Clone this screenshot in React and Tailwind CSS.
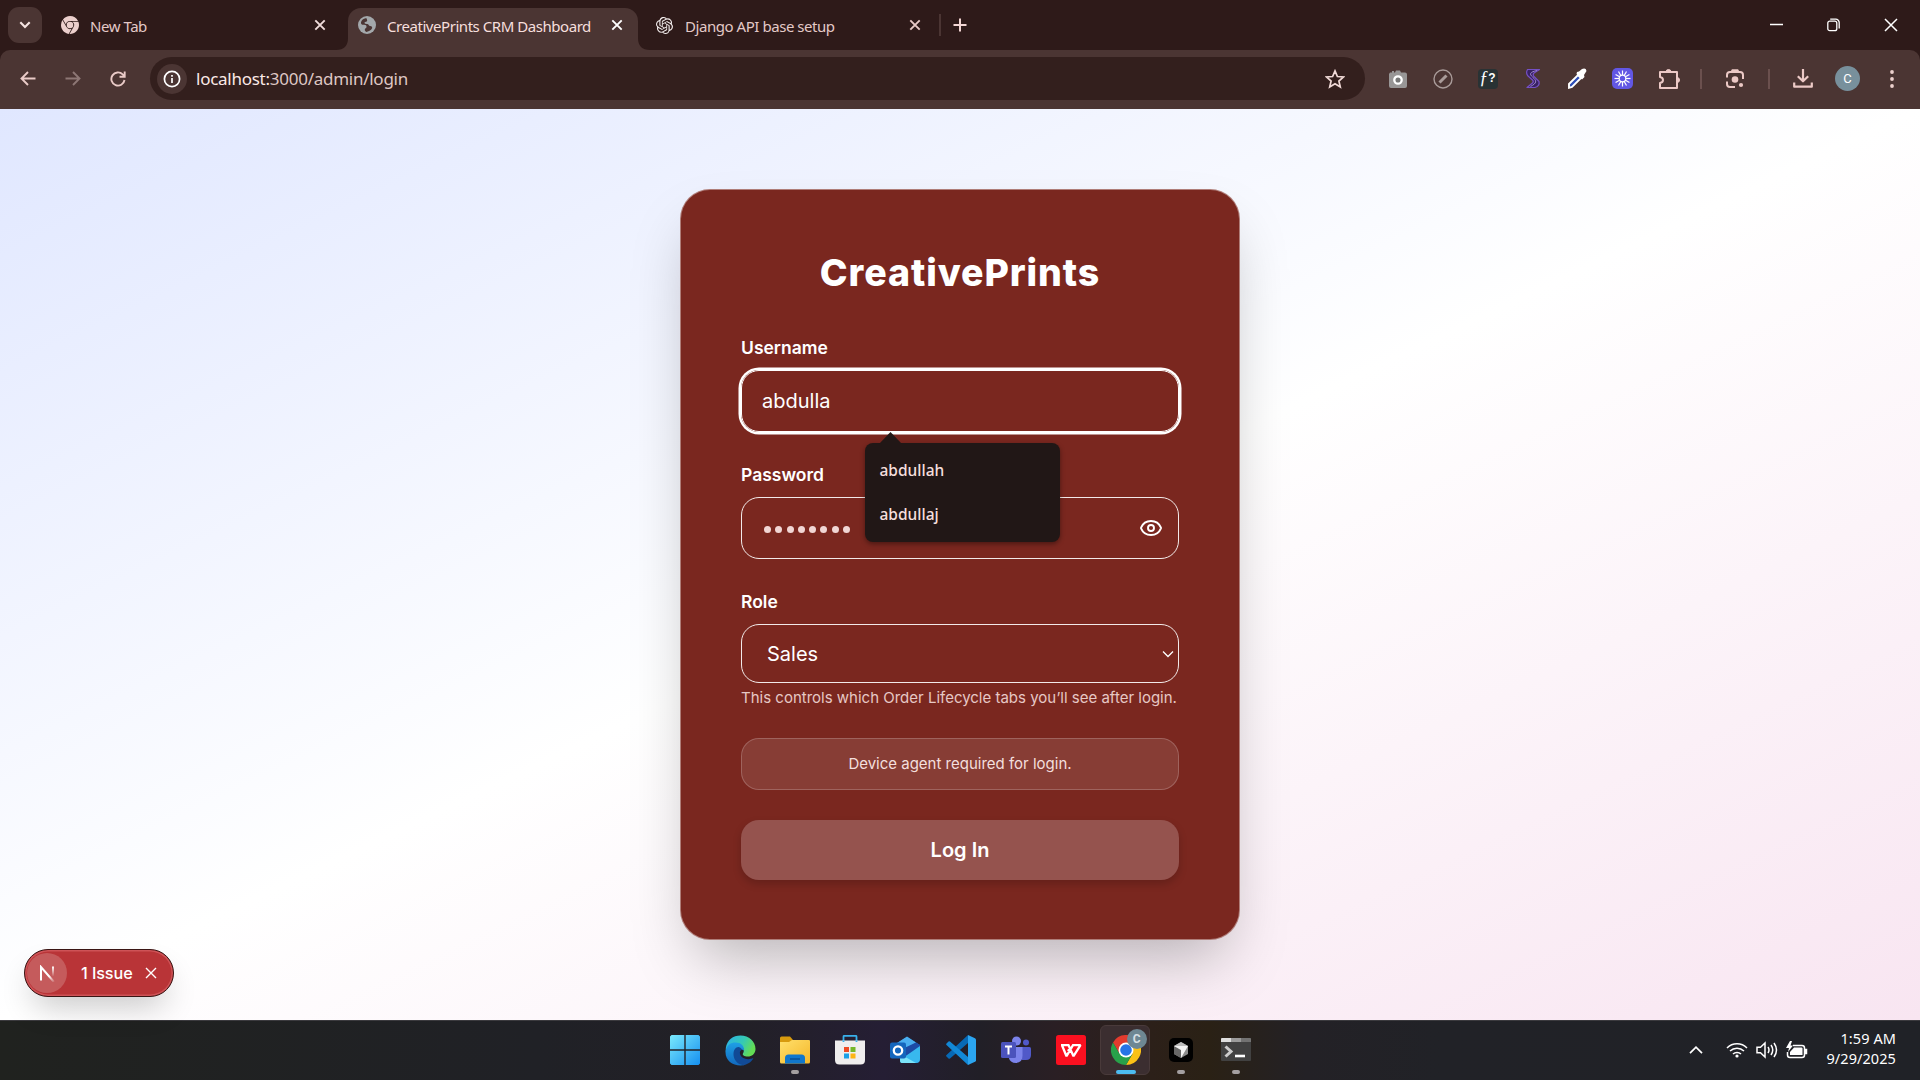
import React from "react";
import { SiGooglechrome, SiOpenai } from "react-icons/si";
import { Eye } from "lucide-react";

const UI = "font-['Noto_Sans','Open_Sans',sans-serif]";

function CloseIcon({ color = "#f0dcdb" }) {
  return (
    <svg width="12" height="12" viewBox="0 0 12 12" stroke={color} strokeWidth="1.9" fill="none">
      <path d="M1.3 1.3l9.4 9.4M10.7 1.3L1.3 10.7" />
    </svg>
  );
}

function TabStrip() {
  return (
    <div className="relative flex h-[50px] bg-[#2e1a19] text-[15px] tracking-[-0.45px] text-[#e3c9c7]">
      <div className="ml-2 mt-[7px] flex h-[36px] w-[34px] items-center justify-center rounded-[11px] bg-[#4b3533]">
        <svg width="12" height="8" viewBox="0 0 12 8" fill="none" stroke="#f6e4e2" strokeWidth="2.1"><path d="M1.3 1.3L6 6l4.700-4.700" /></svg>
      </div>
      <div className="mt-[7px] flex h-9 w-[306px] items-center pl-[19px]">
        <SiGooglechrome size={18} color="#eccfcc" />
        <span className="ml-[11px] w-[224px] pt-[2px]">New Tab</span>
        <CloseIcon />
      </div>
      <div className="relative mt-2 flex h-[42px] w-[290px] items-center rounded-t-[13px] bg-[#4b3533] pb-[8px] pl-[10px] text-[#f6dfdd]">
        <svg className="absolute -left-3 bottom-0" width="12" height="12"><path d="M12 0v12H0Q12 12 12 0Z" fill="#4b3533" /></svg>
        <svg className="absolute -right-3 bottom-0" width="12" height="12"><path d="M0 0v12h12Q0 12 0 0Z" fill="#4b3533" /></svg>
        <svg width="18" height="18" viewBox="0 0 18 18">
          <circle cx="9" cy="9" r="9" fill="#a3a8ab" />
          <path d="M7.500 2.200C5.500 2.600 3.500 4 3 6.200 2.700 8.200 4 8.800 6 8.700c2 0 2.600.8 2.500 2.200 0 1.200-1.600 1.200-1.700 2.700-.1 1 .4 1.800 1.300 2.300 2.300-.1 4.900-1.500 6-3.600.4-1.300-.3-2.300-1.900-2.400-1.500-.1-1.500-1.900-3-2-1.500 0-2.600.1-2.700-1.100 0-1 1.300-.8 2.200-1.200.9-.5.3-2-.2-3.300Z" fill="#4b3533" />
        </svg>
        <span className="ml-[11px] w-[224px] whitespace-nowrap pt-[2px]">CreativePrints CRM Dashboard</span>
        <CloseIcon color="#fff" />
      </div>
      <div className="mt-[7px] flex h-9 w-[303px] items-center border-r-2 border-[#4b3533] pl-[18px] [border-image:linear-gradient(transparent_22%,#4b3533_22%,#4b3533_78%,transparent_78%)_1]">
        <SiOpenai size={17} color="#f4eeee" />
        <span className="ml-[12px] w-[224px] pt-[2px]">Django API base setup</span>
        <CloseIcon color="#e8c9c6" />
      </div>
      <svg className="ml-[12px] mt-[18px]" width="14" height="14" stroke="#f3d6d4" strokeWidth="2"><path d="M7 .5v13M.5 7h13" /></svg>
      <div className="ml-auto flex h-[50px] items-center pr-[22px]">
        <svg width="13" height="14" stroke="#fff" strokeWidth="1.500"><path d="M0 6.500h13" /></svg>
        <svg className="ml-[44px]" width="13" height="14" fill="none" stroke="#fff" strokeWidth="1.300"><rect x=".8" y="3.200" width="9" height="9.500" rx="2" /><path d="M3.200 1.200h5.600a3.400 3.400 0 0 1 3.400 3.400v5.800" /></svg>
        <svg className="ml-[44px]" width="14" height="14" stroke="#fff" strokeWidth="1.500"><path d="M1 1l12 12M13 1L1 13" /></svg>
      </div>
    </div>
  );
}

function ToolSlot({ w = "w-[45px]", children }) {
  return <div className={`flex h-full shrink-0 items-center justify-center ${w}`}>{children}</div>;
}

function Toolbar() {
  const pink = "#eacbc8";
  return (
    <div className="bg-[#2e1a19]">
      <div className="flex h-[59px] items-center rounded-t-[10px] bg-[#4b3533] pb-[2px] pl-[5px]">
        <ToolSlot><svg width="16" height="15" fill="none" stroke={pink} strokeWidth="1.900"><path d="M15.500 7.500H1.500M8 1L1.500 7.500 8 14" /></svg></ToolSlot>
        <ToolSlot><svg width="16" height="15" fill="none" stroke="#8d7775" strokeWidth="1.900"><path d="M.5 7.500h14M8 1l6.500 6.500L8 14" /></svg></ToolSlot>
        <ToolSlot><svg width="16" height="16" fill="none" stroke={pink} strokeWidth="1.900"><path d="M14.500 9A6.600 6.600 0 1 1 12.700 3.400l1.800 1.900M14.700.5v5.200H9.500" /></svg></ToolSlot>
        <div className="ml-[10px] flex h-[43px] w-[1215px] shrink-0 items-center rounded-full bg-[#331f1d] pl-[7px] pr-[20px]">
          <div className="flex h-[30px] w-[30px] items-center justify-center rounded-full bg-[#4b3533]">
            <svg width="18" height="18" fill="none" stroke="#fff" strokeWidth="1.700"><circle cx="9" cy="9" r="7.600" /><path d="M9 8v5M9 5v1.700" /></svg>
          </div>
          <span className="ml-[9px] text-[17px] tracking-[-0.26px] text-[#dfc7c4]"><span className="text-[#fbe9e7]">localhost:</span>3000/admin/login</span>
          <svg className="ml-auto" width="20" height="20" viewBox="0 0 20 20" fill="none" stroke="#f0d9d6" strokeWidth="1.700"><path d="M10 1.900l2.400 5.600 6.100.5-4.600 4 1.400 6L10 14.800 4.700 18l1.400-6-4.600-4 6.100-.5Z" /></svg>
        </div>
        <div className="ml-[10px] flex h-full shrink-0 items-center">
          <ToolSlot>
            <svg width="20" height="20"><path d="M2 3.500h2v-1.500h2v1.500h1l1-2h4l1 2h4a2 2 0 0 1 2 2V17a2 2 0 0 1-2 2H3a2 2 0 0 1-2-2V5Z" fill="#989696" /><circle cx="10" cy="11" r="3.700" fill="#777" stroke="#fff" strokeWidth="2.300" /></svg>
          </ToolSlot>
          <ToolSlot><svg width="20" height="20" fill="none" stroke="#a99b99"><circle cx="10" cy="10" r="9" strokeWidth="1.400" /><path d="M6.500 13.500L13.500 6.500" strokeWidth="3" /></svg></ToolSlot>
          <ToolSlot><div className="flex h-5 w-5 items-center justify-center rounded-[4px] bg-[#293234] pb-[2px] font-['Liberation_Serif',serif] text-[18px] italic leading-none text-white">ƒ<span className="font-['Liberation_Sans',sans-serif] text-[12px] font-bold not-italic">?</span></div></ToolSlot>
          <ToolSlot><svg width="18" height="21" fill="none"><path d="M15.500 1.500H3.500Q1.500 5 4 8l4.500 4q1.500 1.500 0 3L3 19.500h8q5-1.500 4-6L9.500 8q-1-1.500.5-3Z" fill="#382263" stroke="#7550c5" strokeWidth="1.200" strokeLinejoin="round" /><path d="M13 2.500C6 4 5 6 8.500 9c4.500 4 4.500 6-2 9.500" stroke="#a78fd8" strokeWidth=".9" /></svg></ToolSlot>
          <ToolSlot><svg width="21" height="21" viewBox="0 0 21 21"><path d="M2 16l9-9 3 3-9 9-3 .8Z" fill="#2c4db7" stroke="#fff" strokeWidth="1.900" /><path d="M10 4l2-.5L15 1q4-1.500 4.500 2L17 7l.5 2-2.500 2.500L9.500 6Z" fill="#fff" /></svg></ToolSlot>
          <ToolSlot><svg width="21" height="21"><rect width="21" height="21" rx="5" fill="#6257e4" /><g stroke="#fff" strokeWidth="1.200">{[0, 30, 60, 90, 120, 150, 180, 210, 240, 270, 300, 330].map((a) => <path key={a} d="M10.500 2.500v4.600" transform={`rotate(${a} 10.500 10.500)`} />)}</g><circle cx="10.500" cy="10.500" r="3.300" fill="none" stroke="#fff" strokeWidth="1.200" /></svg></ToolSlot>
          <ToolSlot w="w-[47px]"><svg width="22" height="22" fill="none" stroke="#ecc9c6" strokeWidth="2"><path d="M2 4h17v16H2v-5c4-.5 4-5.500 0-6Z" strokeLinejoin="round" /><path d="M8 4a2.500 2.500 0 0 1 5 0ZM19 9.500a2.500 2.500 0 0 1 0 5Z" fill="#ecc9c6" strokeWidth="1" /></svg></ToolSlot>
          <div className="ml-[8px] h-[20px] w-[2px] bg-[#6b504e]" />
          <ToolSlot w="w-[66px]"><svg width="20" height="20" fill="none" stroke="#ecc9c6" strokeWidth="2"><path d="M2 8.500V6a3 3 0 0 1 3-3h10a3 3 0 0 1 3 3v4M2 12.500V15a3 3 0 0 0 3 3h5" /><path d="M6.500 3l1-1.700h5l1 1.700" /><circle cx="10" cy="10.500" r="3.300" fill="#ecc9c6" stroke="none" /><circle cx="16" cy="16" r="2.100" fill="#ecc9c6" stroke="none" /></svg></ToolSlot>
          <div className="h-[20px] w-[2px] bg-[#6b504e]" />
          <ToolSlot w="w-[66px]"><svg width="20" height="21" fill="none" stroke="#ecc9c6" strokeWidth="2.200"><path d="M10 1v12M4.800 8.200L10 13.300l5.200-5.100M1.200 14.500v4.200h17.600v-4.200" strokeLinejoin="round" /></svg></ToolSlot>
          <ToolSlot w="w-[23px]"><div className="flex h-[25px] w-[25px] shrink-0 items-center justify-center rounded-full bg-[#78909c] font-['Roboto',sans-serif] text-[13px] text-white">C</div></ToolSlot>
          <ToolSlot w="w-[61px] pl-[5px]"><svg width="4" height="20" fill="#ecd0cd"><circle cx="2" cy="3" r="1.900" /><circle cx="2" cy="10" r="1.900" /><circle cx="2" cy="17" r="1.900" /></svg></ToolSlot>
        </div>
      </div>
    </div>
  );
}

const label = "block h-[25px] text-[17.5px] font-semibold leading-[25px]";

function LoginCard() {
  return (
    <main className="h-[751px] w-[560px] rounded-[30px] border border-white/40 bg-[#7a271f] p-[60px] font-['Inter',sans-serif] text-white shadow-[0_31px_62px_-15px_rgba(0,0,0,0.28)]">
      <h1 className="text-center text-[37.5px] font-extrabold leading-[45px] tracking-[0.9px]">CreativePrints</h1>
      <div className="relative mt-10">
        <span className={label}>Username</span>
        <div className="mt-[10px] flex h-[62px] items-center rounded-[18px] border border-white px-[20px] text-[20px] ring-[2.5px] ring-white">abdulla</div>
        <div className="absolute left-[124px] top-[108px] z-10 flex h-[99px] w-[195px] flex-col rounded-[8px] bg-[#211716] py-[5px] shadow-[0_2px_5px_rgba(0,0,0,0.4)]">
          <svg className="absolute -top-[11px] left-[14px]" width="23" height="12"><path d="M0 12L11.500 0 23 12Z" fill="#211716" /></svg>
          {["abdullah", "abdullaj"].map((name) => (
            <span key={name} className={`${UI} flex h-[45px] items-center pl-[14.500px] text-[15.5px] font-medium text-[#f5dfdd]`}>{name}</span>
          ))}
        </div>
      </div>
      <div className="mt-[30px]">
        <span className={label}>Password</span>
        <div className="mt-[10px] flex h-[62px] items-center justify-between rounded-[18px] border border-white/90 pl-[22px] pr-[15px]">
          <div className="mt-[2px] flex gap-[4.3px]">
            {[0, 1, 2, 3, 4, 5, 6, 7].map((i) => <i key={i} className="h-[7px] w-[7px] rounded-full bg-[#f1d6d4]" />)}
          </div>
          <Eye size={24} strokeWidth={1.9} />
        </div>
      </div>
      <div className="mt-[30px]">
        <span className={label}>Role</span>
        <div className="mt-[10px] flex h-[59px] items-center justify-between rounded-[18px] border border-white/90 pl-[25px] pr-[4px] text-[20px]">
          Sales
          <svg width="12" height="8" fill="none" stroke="#fff" strokeWidth="1.300"><path d="M1 1.500l5 5 5-5" /></svg>
        </div>
        <p className="mt-[5px] whitespace-nowrap text-[15px] leading-[20px] text-[#e6c8c5]">This controls which Order Lifecycle tabs you’ll see after login.</p>
      </div>
      <div className="mt-[30px] flex h-[52px] items-center justify-center rounded-[18px] border border-white/20 bg-white/10 text-[15px] text-[#f3dfdd]">Device agent required for login.</div>
      <button className="mt-[30px] block h-[60px] w-full rounded-[18px] bg-[#95534e] text-[20px] font-semibold shadow-[0_4px_8px_rgba(0,0,0,0.18)]">Log In</button>
    </main>
  );
}

function IssueBadge() {
  return (
    <div className="absolute bottom-[23px] left-[24px] flex h-[48px] w-[150px] items-center rounded-full border-[1.500px] border-[#3a1514] bg-[#b93437] pl-[2px] font-['Inter',sans-serif] text-white shadow-[inset_0_0_0_1.5px_#ce5357,0_16px_32px_-8px_rgba(0,0,0,0.24)]">
      <div className="flex h-10 w-10 items-center justify-center rounded-full bg-[#c55b5c]">
        <svg width="17" height="17" fill="none">
          <defs>
            <linearGradient id="stem" x1="0" y1="0" x2="0" y2="1"><stop stopColor="#fff" /><stop offset="1" stopColor="#fff" stopOpacity="0" /></linearGradient>
            <linearGradient id="diag" gradientUnits="userSpaceOnUse" x1="2" y1="2" x2="16" y2="17"><stop offset=".6" stopColor="#fff" /><stop offset="1" stopColor="#fff" stopOpacity="0" /></linearGradient>
          </defs>
          <path d="M2 15.500V2L15 17" stroke="url(#diag)" strokeWidth="2" />
          <rect x="13" y="1.500" width="2" height="10" fill="url(#stem)" />
        </svg>
      </div>
      <span className="ml-[14px] w-[53px] whitespace-nowrap text-[16.25px] font-medium tracking-[-0.1px]">1 Issue</span>
      <svg className="ml-[11px]" width="12" height="12" stroke="#fff" strokeWidth="1.400"><path d="M1 1l10 10M11 1L1 11" /></svg>
    </div>
  );
}

function StartIcon() {
  return (
    <svg width="30" height="30"><defs><linearGradient id="win" gradientUnits="userSpaceOnUse" x1="0" y1="0" x2="30" y2="30"><stop stopColor="#7ae9fc" /><stop offset="1" stopColor="#158ff0" /></linearGradient></defs><path d="M1.500 0H14.300V14.300H0V1.500ZM15.700 0H28.500L30 1.500V14.300H15.700ZM0 15.700H14.300V30H1.500L0 28.500ZM15.700 15.700H30V28.500L28.500 30H15.700Z" fill="url(#win)" /></svg>
  );
}
function EdgeIcon() {
  return (
    <svg width="31" height="31" viewBox="0 0 31 31">
      <defs>
        <linearGradient id="e1" x1="0" y1="0" x2="1" y2=".4"><stop stopColor="#2bb0ed" /><stop offset=".6" stopColor="#35c9b4" /><stop offset="1" stopColor="#63dd55" /></linearGradient>
        <linearGradient id="e2" x1="0" y1="0" x2="0" y2="1"><stop stopColor="#1e9fe6" /><stop offset="1" stopColor="#1268bd" /></linearGradient>
      </defs>
      <path d="M.8 13C2 5 8 .5 15.500.5 24 .5 30.500 6.500 30.500 14c0 5-4 7.500-7.500 7.500-4 0-6-1.500-5-3 2-3 .5-8-5-8C7 10.500 2.500 12 .8 17Z" fill="url(#e1)" />
      <path d="M.6 16C1.500 10 6 7.500 10.500 7.500c6 0 9 4 8.500 8-4-3-8 1-7 6 1.200 5 5 8 9 8.200C10 33-.5 26 .6 16Z" fill="url(#e2)" />
      <path d="M11.500 12.500C6 16 8 29 18.500 30.200c4-.5 8.500-3.500 10-7.400-5 3-12.500 1-13.500-4-.5-2 .5-3.500 2-4-1.300-2.800-3.500-3.500-5.500-2.300Z" fill="#114a96" />
    </svg>
  );
}
function FolderIcon() {
  return (
    <svg width="30" height="28"><defs><linearGradient id="fo" x1="0" y1="0" x2="1" y2="1"><stop stopColor="#ffdf6b" /><stop offset="1" stopColor="#f5b82a" /></linearGradient></defs><path d="M0 2q0-1.500 1.500-1.500H10L13 4V10H0Z" fill="#d79a0e" /><path d="M0 6H9L12 4H29q1 0 1 1V26q0 1.500-1.500 1.500h-27Q0 27.500 0 26Z" fill="url(#fo)" /><path d="M5 27.500V22q0-3.500 3.500-3.500h13q3.500 0 3.500 3.500v5.500Z" fill="#1177cc" /><path d="M10 23h10" stroke="#0a4f96" strokeWidth="1.500" /></svg>
  );
}
function StoreIcon() {
  return (
    <svg width="30" height="30"><path d="M8.500 7V1.800q0-1 1-1h11q1 0 1 1V7" fill="none" stroke="#38b1eb" strokeWidth="1.800" /><path d="M0 5.500H30V25q0 4.500-4.500 4.500h-21Q0 29.500 0 25Z" fill="#f0eeee" /><path d="M8.500 5.500V7M21.500 5.500V7" stroke="#38b1eb" strokeWidth="1.800" /><path d="M9 12h5v5H9Z" fill="#ef4b24" /><path d="M15.500 12h5v5h-5Z" fill="#76b729" /><path d="M9 18.500h5v5H9Z" fill="#1ba1e8" /><path d="M15.500 18.500h5v5h-5Z" fill="#fdb515" /></svg>
  );
}
function OutlookIcon() {
  return (
    <svg width="30" height="28"><path d="M4 9L17 1 30 9V14L14 19Z" fill="#1773c9" /><path d="M7 7L17 .5 26 6.500 12 15Z" fill="#49aef0" /><path d="M10 14L26 6.500 30 9V23q0 4-4 4H12Z" fill="#1c4ba6" /><path d="M30 10V23q0 4-4 4H12Q10 27 10 24L20 17Z" fill="#38b8ee" /><path d="M10 18l16 9H12q-2 0-2-3Z" fill="#7be3f8" /><rect x="0" y="6.500" width="16" height="16" rx="2" fill="#1466bd" /><circle cx="8" cy="14.500" r="4.200" fill="none" stroke="#fff" strokeWidth="2.300" /></svg>
  );
}
function CodeIcon() {
  return (
    <svg width="30" height="30" viewBox="0 0 30 30"><path d="M22 0l7 3.300q1 .5 1 1.500v20.400q0 1-1 1.500L22 30Z" fill="#2ba5f0" /><path d="M22 0v8L4 23.500q-.8.700-1.500 0L.5 21.600q-.8-.8 0-1.500Z" fill="#0769b5" /><path d="M22 30v-8L4 6.500q-.8-.7-1.500 0L.5 8.400q-.8.800 0 1.500Z" fill="#1288d6" /></svg>
  );
}
function TeamsIcon() {
  return (
    <svg width="30" height="28"><circle cx="25" cy="6.500" r="3" fill="#5059c9" /><path d="M21 11h7.500q1.500 0 1.500 1.500V19q0 5-5 5h-4Z" fill="#5059c9" /><circle cx="15.500" cy="5" r="4.500" fill="#7b83eb" /><path d="M9 11h12.500v8.500q0 7-6.500 7.500-6 0-7.500-6Z" fill="#7b83eb" /><rect y="6" width="15" height="16" rx="1.500" fill="#4b53bc" /><path d="M4 10.500h7M7.500 10.500v8" stroke="#fff" strokeWidth="2" /></svg>
  );
}
function WpsIcon() {
  return (
    <svg width="30" height="30"><rect width="30" height="30" rx="2.500" fill="#fb1020" /><path d="M5 10.200h7.500l5 11L24.500 10.200h-7.500l-6.500 11L6 10.200M12 16l2.500-4" fill="none" stroke="#fff" strokeWidth="2.300" strokeLinejoin="miter" strokeMiterlimit="2" /></svg>
  );
}
function ChromeIcon() {
  return (
    <div className="relative">
      <svg width="30" height="30" viewBox="0 0 48 48"><path d="M24 12H44.800A24 24 0 0 1 24 48L34.400 30Z" fill="#fbc116" /><path d="M3.200 12A24 24 0 0 1 44.800 12H24L13.600 30Z" fill="#e33b2e" /><path d="M3.200 12A24 24 0 0 0 24 48L34.400 30H13.600Z" fill="#28a14a" /><circle cx="24" cy="24" r="12" fill="#fff" /><circle cx="24" cy="24" r="9.300" fill="#2774e6" /></svg>
      <div className="absolute -right-[6px] -top-[6px] flex h-5 w-5 items-center justify-center rounded-full bg-[#6e8793] font-['Roboto',sans-serif] text-[12px] font-bold text-[#d6dfe3]">C</div>
    </div>
  );
}
function CursorIcon() {
  return (
    <svg width="24" height="24"><rect width="24" height="24" rx="5" fill="#000" /><path d="M12 4l7 4v8l-7 4-7-4V8Z" fill="#8b8b8b" /><path d="M5 8l7-4 7 4-7 1Z" fill="#bababa" /><path d="M5 8l7 4v8l-7-4Z" fill="#666" /><path d="M5 8h14l-7 12v-8Z" fill="#f2f2f2" /></svg>
  );
}
function TerminalIcon() {
  return (
    <svg width="30" height="24"><rect width="30" height="23" rx="1" fill="#414141" /><path d="M0 4V1q0-1 1-1h9v4Z" fill="#dedede" /><path d="M10 0h10v4H10Z" fill="#9b9b9b" /><path d="M20 0h9q1 0 1 1v3H20Z" fill="#727272" /><path d="M4.500 8.500L10 13.500l-5.500 5" fill="none" stroke="#ccc" strokeWidth="3" /><path d="M14 18h10" stroke="#fff" strokeWidth="2.600" /></svg>
  );
}

const apps = [
  [StartIcon, ""], [EdgeIcon, ""], [FolderIcon, "dot"], [StoreIcon, ""], [OutlookIcon, ""], [CodeIcon, ""],
  [TeamsIcon, ""], [WpsIcon, ""], [ChromeIcon, "active"], [CursorIcon, "dot"], [TerminalIcon, "dot"],
];

function Taskbar() {
  return (
    <footer className={`${UI} grid h-[60px] grid-cols-[1fr_auto_1fr] border-t border-[#3b3a3e] bg-[linear-gradient(90deg,#20221f_0%,#202126_28%,#222027_39%,#251e34_46%,#211f27_51%,#2a1f24_55%,#2c2019_60%,#2a2115_63%,#232126_68%,#212227_75%,#202227_100%)]`}>
      <div />
      <div className="flex pl-[1px]">
        {apps.map(([Icon, state], i) => (
          <div key={i} className="relative flex w-[55.1px] items-center justify-center pb-[1px]">
            {state === "active" && <div className="absolute left-[2px] top-[4px] h-[50px] w-[50px] rounded-[6px] border border-[#493a3a] bg-[#3b2e30]" />}
            <div className="relative">{<Icon />}</div>
            {state === "active" && <div className="absolute bottom-[6px] h-[4px] w-5 rounded-full bg-[#4cbcf0]" />}
            {state === "dot" && <div className="absolute bottom-[6px] h-[4px] w-[8px] rounded-full bg-[#a49fa1]" />}
          </div>
        ))}
      </div>
      <div className="flex items-center justify-end pb-[2px] pr-[24px] text-white">
        <svg width="14" height="8" fill="none" stroke="#fff" strokeWidth="1.700"><path d="M1 7.200l6-6 6 6" /></svg>
        <svg className="ml-[23px]" width="22" height="16" viewBox="0 0 22 16" fill="none" stroke="#fff" strokeWidth="1.500"><path d="M1 6a14 14 0 0 1 20 0M4 9a10 10 0 0 1 14 0M7 12a5.800 5.800 0 0 1 8 0" /><circle cx="11" cy="14" r="1.600" fill="#fff" stroke="none" /></svg>
        <svg className="ml-[8px]" width="22" height="18" fill="none" stroke="#fff" strokeWidth="1.500"><path d="M1 6.200h3.500L9 2v14l-4.500-4.200H1ZM12 6q2 3 0 6M15 4q3.500 5 0 10M18 2q5 7 0 14" /></svg>
        <svg className="ml-[8px]" width="22" height="18" fill="none" stroke="#fff" strokeWidth="1.500"><path d="M7 4.500h9q2.500 0 2.500 2.500v7q0 2.500-2.500 2.500H4q-2.500 0-2.500-2.500v-3" /><path d="M8 6.500h7.500q1 0 1 1V14H4v-3Z" fill="#fff" stroke="none" /><path d="M19 8.500h1.500v4H19Z" fill="#fff" /><path d="M4 0L0 7h3L2 11l5-6.500H4.500L6 0Z" fill="#fff" stroke="none" /></svg>
        <div className="mb-[3px] ml-[18px] w-[70px] whitespace-nowrap text-[14.5px] leading-[20px] tracking-[0.08px]"><div className="flex justify-end">1:59 AM</div><div className="flex justify-end">9/29/2025</div></div>
      </div>
    </footer>
  );
}

export default function App() {
  return (
    <div className="flex h-[1080px] w-[1920px] flex-col overflow-hidden">
      <header className={UI}>
        <TabStrip />
        <Toolbar />
      </header>
      <section className="relative flex h-[911px] items-center justify-center bg-[linear-gradient(to_bottom_right,#e0e7ff,#ffffff_50%,#f8e5f1)]">
        <LoginCard />
        <IssueBadge />
      </section>
      <Taskbar />
    </div>
  );
}
